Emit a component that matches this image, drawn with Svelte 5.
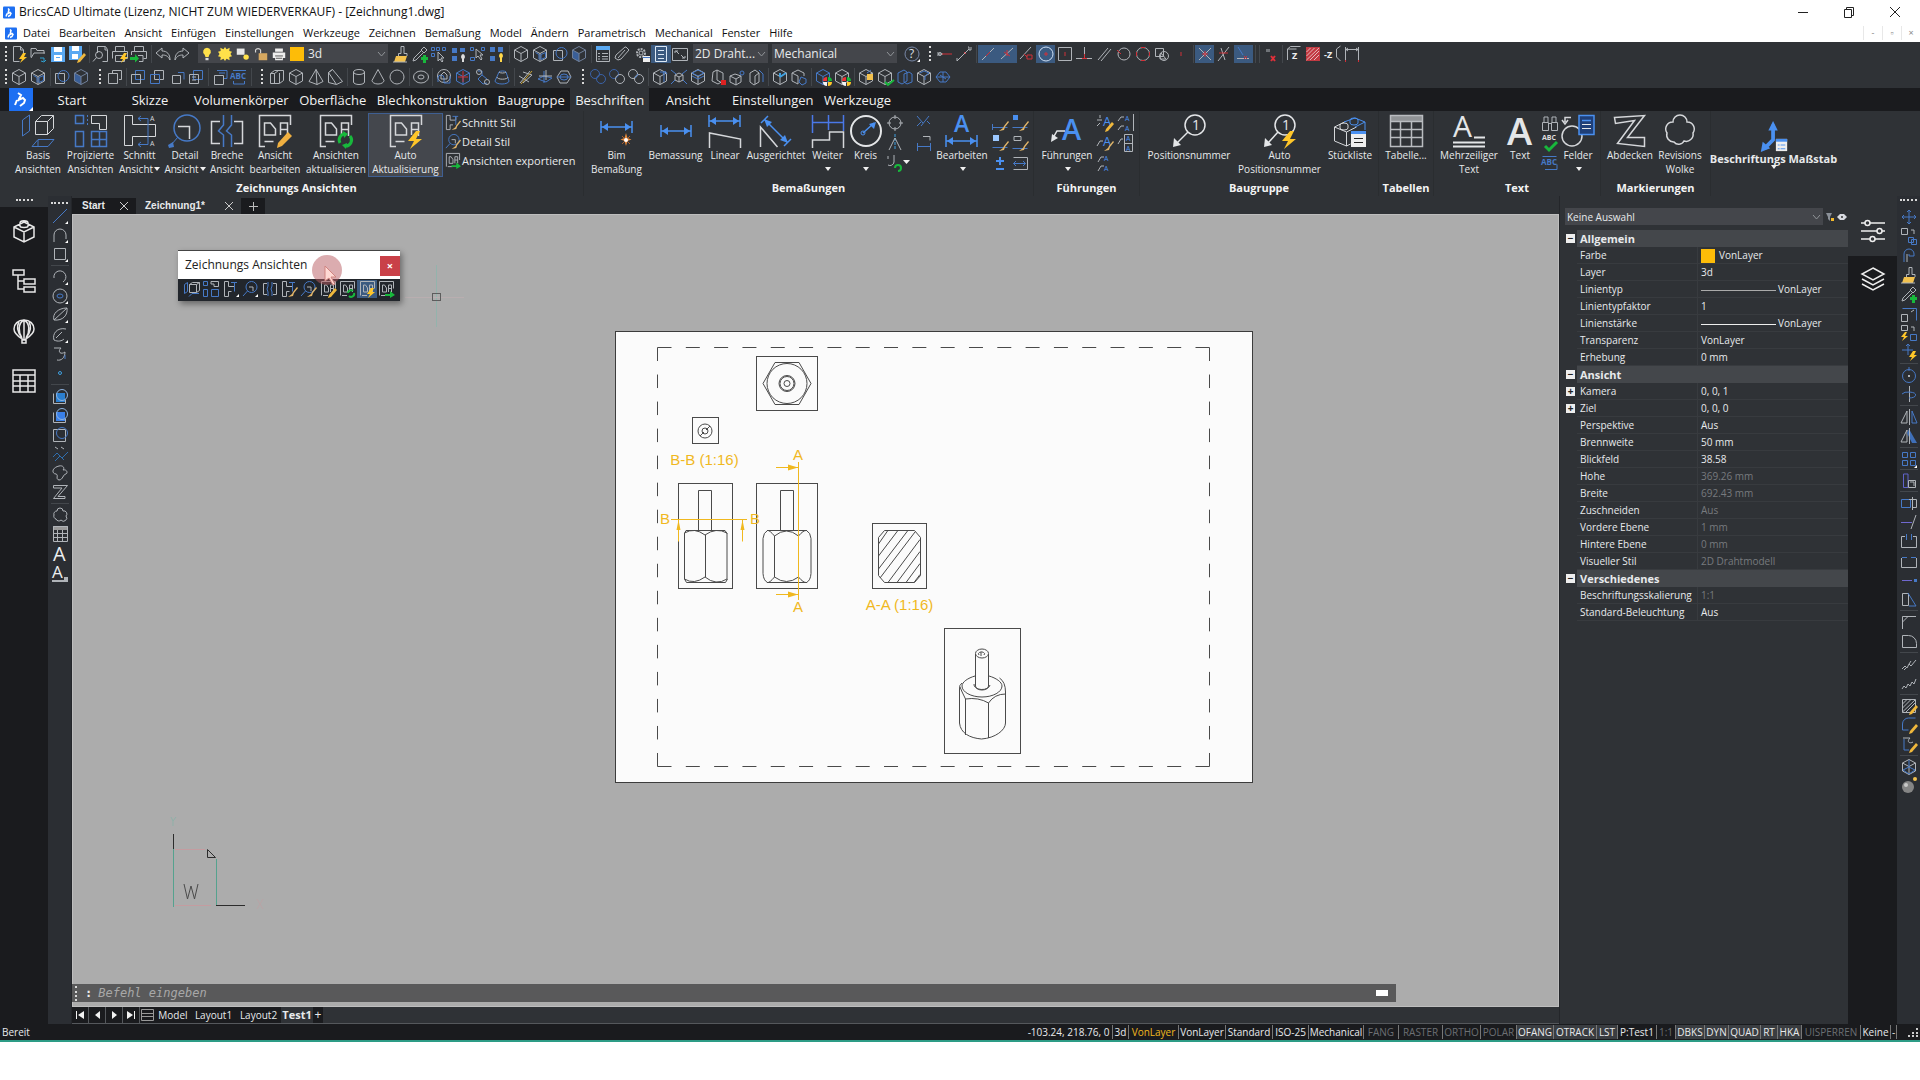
<script>
  const G = '#b0b4b9';
  const BL = '#4679c6';
  const p = (c, d, x = '') => `<path d="${d}" stroke="${c}" ${x}/>`;
  const w = (d) => p(G, d);
  const W = (d) => p('#e4e6e8', d, 'stroke-width="2"');
  const b = (d) => p(BL, d);
  const B = (d) => p('#4a90f0', d, 'stroke-width="2"');
  const r = (d) => p('#d03038', d);
  const f = (c, d) => `<path d="${d}" fill="${c}" stroke="none"/>`;
  const c = (x, y, rad, col = G, extra = '') => `<circle cx="${x}" cy="${y}" r="${rad}" stroke="${col}" ${extra}/>`;
  const t = (s, x, y, size, col, extra = '') =>
    `<text x="${x}" y="${y}" font-size="${size}" fill="${col}" stroke="none" font-family="Open Sans, sans-serif" ${extra}>${s}</text>`;

  const cubeD = 'M9 1.5l6.5 3.5v8L9 16.5 2.5 13V5zM2.5 5L9 8.5 15.5 5M9 8.5v8';
  const pen = f('#f0b83c', 'M16 8l2 2-6 7-3 1 1-3z');
  const bolt = f('#ffc629', 'M13 8l-4 6h3l-2 4 7-6h-3l2-4z');
  const brush = f('#e2b56a', 'M17 7l1 1-4 5-1 3-5 1 4-3 1-2z');
  const arrowG = f('#18b83c', 'M8 14h5v-3l5 4-5 3v-2H8z');
  const da = '<path d="M2.5 15.5v-14h14v7M4 15.5h5M5.500 12V5h2l2 3v4zM11.500 12V5h3v7M11.500 8.500h3" stroke="#b0b4b9"/>';
  const schnitt = w('M2.5 1.5h4v5h6v-4M2.500 1.500v15h4v-5h3') + b('M9 2.500h6M12.500 2.500v9');
  const detail = b('M16 7a5.500 5.500 0 1 1-11 0a5.500 5.500 0 1 1 11 0M6.500 11L2 16') + w('M8 7h4v4');
  const pie = f('#18b83c', 'M14 13V9a4 4 0 0 1 4 4z') + f('#e33', 'M13 13V9a4 4 0 0 0-4 4z') + f('#f4f4f4', 'M13 14H9a4 4 0 0 0 4 4z') + f('#ffc629', 'M14 14h4a4 4 0 0 1-4 4z');
  const sq2 = b('M6.500 2.500h9v9h-9z') + w('M2.500 6.500h9v9h-9z');

  const I = {
    neu: w('M13.500 8V5l-3-3.500h-7v15h6M10.500 1.500V5h3') + bolt,
    open: w('M2 12V3.500h5l1 2h7v3M2 13l3-5h11') + p('#2f9fd0', 'M11 13h4v3M12 16l3 1 2-2'),
    save: f('#5aa9f2', 'M2 2h14v15H2z') + f('#fff', 'M5 2h8v5H5zM5 10h8v6H5z') + f('#5aa9f2', 'M7 12h4v1H7z'),
    saveas: f('#5aa9f2', 'M1 1h13v14H1z') + f('#fff', 'M4 1h7v5H4zM4 9h6v5H4z') + pen,
    preview: w('M5.500 8V1.500h8l2 3v12h-5M13 2v3h2') + c(7, 10, 3.500) + w('M4.500 12.500L1 16.500'),
    print: w('M4.500 6V1.500h9V6M1.500 13.500v-7h15v7h-3M4.500 10.500h9v6h-9z') + bolt,
    printx: w('M4.500 6V1.500h9V6M1.500 10V6.500h15v7h-3M8 10.500h5v6H9') + f('#18b83c', 'M0 12h5v-3l4 4.500-4 4V15H0z'),
    undo: p(G, 'M8 3L2 8l6 5v-3c4 0 6 1 8 5 0-6-3-9-8-9z'),
    redo: p(G, 'M10 3l6 5-6 5v-3c-4 0-6 1-8 5 0-6 3-9 8-9z'),
    bulb: f('#ffe14a', 'M9 1a5 5 0 0 1 3 9l-1 3H7l-1-3a5 5 0 0 1 3-9z') + f('#ddd', 'M7 14h4v3H7z'),
    sun: f('#ffe14a', 'M9 0l2 3 4-2-.500 4 3.500 1-2 3 2 3-3.500 1L15 17l-4-2-2 3-2-3-4 2 .500-4L0 12l2-3-2-3 3.500-1L3 1l4 2z'),
    vp: f('#e6e6e6', 'M1 2h10v8H1z') + c(13, 13, 3.500, 'none', 'fill="#ffe14a"'),
    lock: f('#d6a860', 'M6 8h11v9H6z') + p('#d6d6d6', 'M8.500 8V4a3.500 3 0 0 0-6.500 0v3', 'stroke-width="1.500"'),
    printer: f('#eee', 'M4 2h10v4H4zM1 7h16v7H1zM4 12h10v5H4z') + p('#333', 'M4 11.500h10M5 14.500h8'),
    paint: f('#f2c14e', 'M4 11h11l-2 6H2z') + w('M6.500 11V8.500H9V1.500h3v7h3V11M1 17h14'),
    drop: w('M13 2l3 3-3 3-3-3zM10 6l-7 7-1 3 3-1 7-7') + f('#18b83c', 'M12 10h3v2h2v3h-2v3h-3v-3h-2v-3h2z'),
    sel1: b('M1.500 2.500h3v3h-3zM6.500 2.500h3v3h-3zM12.500 2.500h3v3h-3zM1.500 8.500h3v3h-3z') + w('M8 7v9l2-2 2 3 1-1-2-3h3z'),
    sel2: f(BL, 'M2 3h5v5H2zM2 11h5v5H2zM10 3h5v4h-5z') + f('#ddd', 'M13 9a3 3 0 0 1 1 5v3h-2v-3a3 3 0 0 1 1-5z'),
    sel3: b('M1.500 2.500h3v3h-3zM12.500 2.500h3v3h-3zM1.500 12.500h4v3h-4z') + w('M7 4v9l2-2 3 4 1-1-2-4h3z'),
    sel4: f(BL, 'M2 2h5v5H2zM10 2h5v5h-5zM2 11h5v5H2z') + f('#ffd84a', 'M13 8a3 3 0 0 1 1 5v4h-2v-4a3 3 0 0 1 1-5z'),
    cube: w(cubeD),
    cubeB: w(cubeD) + b('M4.500 7.500L8 9.500v5M10 9.500l4.500-2v5L10 14.500z'),
    cyl: w('M2.500 5.500h9v10h-9z') + b('M16 8a5.500 5.500 0 1 1-11 0a5.500 5.500 0 1 1 11 0'),
    cubeD: f('#3a5f98', 'M2.500 5L9 8.500v8L2.500 13z') + p('#70809a', cubeD),
    list: f('#5aa9f2', 'M2 1h14v4H2z') + w('M2.500 5v11.500h13V5M4 8.500h2M4 11.500h2M4 14h2M8 8.500h6M8 11.500h6M8 14h6'),
    clip: w('M13 2l3 3-8 9-3 1-3-2 1-3 9-8zM12 5l-7 8'),
    gear: c(8, 8, 4, G, 'stroke-dasharray="2 1" stroke-width="2"') + c(8, 8, 2) + f('#eee', 'M10 11h7v6h-7z') + b('M10 12.500h7'),
    panel: p('#dce8f5', 'M3.500 1.500h11v15h-11zM6 5.500h6M6 9.500h6M6 13.500h6'),
    full: w('M1.500 3.500h15v12h-15zM4 8V6h3M5 6l3 3M14 11v2h-3M13 13l-3-3'),
    help: c(9, 9, 7, '#7888a8') + t('?', 6, 13, 12, '#dfe3ea') + f('#fff', 'M17 14v3h-3z'),
    e1: w('M2 9h5M2 7v4') + r('M6 9h10') + c(4, 9, 1.500),
    e2: w('M2 16L14 4M2 13v3M13 2h1v3h2V2') + r('M9 7l2 2'),
    e3: w('M3 15L15 3') + r('M7 11l4-4'),
    e4: w('M3 14L15 3') + r('M6 7l6 4M9 5v6'),
    e5: w('M3 14L14 2') + r('M10 10h5v4h-5zM7 9l3 3'),
    e6: c(9, 9, 7, '#cfe0f5') + r('M9 7v4M7 9h4'),
    e7: w('M2.500 2.500h13v13h-13z') + r('M9 7v4'),
    e8: w('M1 13.500h16M9.500 2v7') + r('M9.500 9v5M7 13.500h5'),
    e9: w('M3 15L13 3M6 16L16 4'),
    e10: c(10, 9, 6) + r('M3 5l4 4'),
    e11: c(9, 9, 6.500) + r('M7 2.500h4M7 15.500h4M2.500 7v4M15.500 7v4'),
    e12: w('M2.500 3.500h8v8h-8z') + c(11, 11, 4.500) + w('M8 8l5 6h-6z'),
    e13: r('M8 8h2M8 10h2'),
    e14: w('M3 3l12 12M15 3L3 15') + r('M9 6v6M6 9h6'),
    e15: w('M3 16L14 2M6 3l4 12') + r('M4 8h9'),
    e16: w('M3 13.500h12') + b('M4 2l5 8') + r('M10 11l3 3M13 11l-3 3'),
    e17: w('M5 4v3M7 4v3') + p('#e0303a', 'M9 11l4 5M13 11l-4 5', 'stroke-width="2"'),
    e18: w('M2.500 15V4l3-2.500h10M2.500 4h9') + t('Z', 7, 14, 9, '#eee', 'font-weight="700"'),
    e19: f('#c23a42', 'M2 2h14v14H2z') + p('#e6b8ba', 'M2.500 7l4-4M2.500 11l8-8M2.500 15L15 3M6 15l9-9M10 15l5-5'),
    e20: t('-Z', 0, 13, 9, '#eee', 'font-weight="700"') + w('M12.500 12V4l4-3M12.500 12l4 4'),
    e21: w('M2.500 16V2M15.500 16V2M3 4.500h12M5 3L3 4.500 5 6M13 3l2 1.500L13 6') + r('M2.500 15v2M15.500 15v2'),
    sq: w('M6.500 5V2.500h9v9H13M2.500 5.500h9v10h-9z'),
    sqA: sq2,
    sqB: w('M6.500 2.500h9v9h-9z') + b('M2.500 6.500h9v9h-9z'),
    sqC: w('M4.500 7.500h8v8h-8z') + b('M10 4.500h6v7'),
    sqD: sq2 + w('M5 9h4M5 12h4'),
    sqE: w('M3.500 7.500h9v9h-9z') + b('M6 2.500h10v8h-3M8 5h6'),
    abc: t('ABC', 0, 11, 8, BL, 'font-weight="700"') + b('M3 2.500h13M3.500 13v3h11v-3'),
    poly: w('M2.500 5.500l4-3h9v10l-4 3h-9zM2.500 5.500h4v10M6.500 5.500l4-3M11.500 5v10'),
    pyr: w('M9 1.500l7 12-6 3-8-3zM9 1.500l1 15'),
    wedge: w('M2.500 4.500v10l8 2 6-3-10-12zM2.500 4.500l8 12M2.500 4.500l4-3'),
    can: w('M3.500 4a5.500 2.500 0 0 1 11 0v10a5.500 2.500 0 0 1-11 0zM3.500 4a5.500 2.500 0 0 0 11 0'),
    cone: w('M9 1.500l6 11a6 3.500 0 0 1-12 0z'),
    ball: c(9, 9, 7),
    torus: w('M1.500 9a7.500 6 0 1 1 15 0a7.500 6 0 1 1-15 0M6 9a3 2 0 1 1 6 0a3 2 0 1 1-6 0'),
    k1: c(9, 8, 6.500) + b('M3 14v-4a3 3 0 0 1 6 0v5h6V8') + w('M6 7l3-3 3 3v4H6z'),
    k2: b(cubeD) + r('M9 3v11M4 9h10'),
    k3: b('M4 3h4v4l5 4M8 7l-4 4 5 5 4-1') + c(5, 4, 2.500) + c(13, 14, 2.500),
    k4: b('M6 4a4 2 0 0 1 7 0l3 9a7 3 0 0 1-14 0z') + w('M6 4a4 2 0 0 0 7 0M4 9a5 2 0 0 0 11 0'),
    k5: w('M3 15L13 3M2 8l10 6M6 4l9 3-9 8') + p('#c8a030', 'M4 16L15 3'),
    k6: b('M2 11l6-3 8 2-6 4zM8 3v12') + w('M10 2v10M3 8h13'),
    k7: w('M2 9l4-6h7l3 6-4 6H5z') + b('M5 9a4 3 0 1 1 8 0a4 3 0 1 1-8 0M2 9h14'),
    un1: c(6, 6, 4.500, '#3a62a8') + c(12, 11, 4.500, '#3a62a8'),
    un2: c(6, 6, 4.500, '#3a62a8') + c(12, 11, 4.500),
    un3: c(6, 6, 4.500) + c(12, 11, 4.500) + b('M8 10l3-4'),
    cu1: w(cubeD) + b('M9 4h4v10M12 6l2-3 2 3'),
    cu2: w('M9 5l4 2v5l-4 2-4-2V7zM5 7l4 2 4-2M9 9v5') + b('M1 2l5 4M17 2l-5 4M1 16l4-4M17 16l-4-4'),
    cu3: w(cubeD) + b('M3 5l6-3 6 3-6 3zM3 8l6 3 6-3'),
    cu4: w('M4 4l4-2 6 3v8l-5 3-6-3zM8 2v10l5 3') + f('#d22', 'M12 12h5v5h-5z'),
    cu5: w('M2 8l5-2 6 2v6l-5 3-6-3zM2 8l6 3 5-3M8 11v6') + b('M12 5a2 2 0 1 1 4 0a2 2 0 1 1-4 0'),
    cu6: w('M3 5l5-3 4 3v9l-5 3-4-3zM12 5l-4 3v8') + b('M12 2l4 4v8'),
    cu7: w(cubeD) + p('#3fa0e0', 'M9 9l6-4M9 9V5', 'stroke-width="2"'),
    cu8: w('M2 5l6-3 6 3v3M2 5v8l6 3M2 5l6 3v8') + b('M11 9l5 2v4l-4 2-3-3z'),
    pieA: b(cubeD) + pie,
    pieB: w(cubeD) + pie,
    cuY: w(cubeD) + f('#f2c14e', 'M10 6h6v6h-6z') + b('M10 5l4-3'),
    cuG: w(cubeD) + p('#18b83c', 'M9 14l3 3 6-5', 'stroke-width="2"'),
    cuP: b('M2 5l6-3 3 2v9l-5 3-4-2zM8 6l5-2 3 2v8l-5 2-3-2z'),
    cuW: w(cubeD) + b('M5 5l4-2 5 2-4 3v4'),
    cuL: b('M2 9l4-5h6l4 5-4 5H6zM2 9h14M9 4v10M6 7l6 4'),
    v1: b('M1.500 4.500l3-2v9l-3 2zM6 16.500l3-3h7') + w('M6.500 4.500l3-2h7v8l-3 2h-7zM6.500 4.500h7v8M13.500 4.500l3-2'),
    v2: b('M1.500 1.500h4v4h-4zM1.500 9.500h4v7h-4zM9.500 9.500h7v7h-7z') + w('M9 1.500h7.500v5H12v-2.500H9z'),
    v3: schnitt + f('#fff', 'M17 14v3h-3z'),
    v4: detail + f('#fff', 'M17 14v3h-3z'),
    v5: w('M6 3.500H2.500v11H6M12 3.500h3.500v11H12') + b('M7 2v4l-1 3 1 3v4M11 2v4l-1 3 1 3v4'),
    v6: schnitt + brush, v7: detail + brush, v8: da + pen,
    v9: da + p('#18b83c', 'M10 13a3 3 0 0 1 5-2M16 13a3 3 0 0 1-5 3', 'stroke-width="2"'),
    v10: da + bolt, v11: da + arrowG,
    l1: b('M2 16L16 2') + f('#fff', 'M17 14v3h-3z'),
    l2: w('M3 16V9a6 6 0 0 1 12 0v4') + f('#fff', 'M17 14v3h-3z'),
    l3: w('M3.500 3.500h11v11h-11z') + f('#fff', 'M17 14v3h-3z'),
    l4: w('M3 10a6 6 0 1 1 9 4') + f('#fff', 'M17 14v3h-3z'),
    l5: c(9, 9, 7) + b('M6 9a3 2 0 1 1 6 0a3 2 0 1 1-6 0') + f('#fff', 'M17 14v3h-3z'),
    l6: w('M3 14C1 8 7 2 16 2c1 7-4 13-13 12zM3 14L16 2') + f('#fff', 'M17 14v3h-3z'),
    l7: w('M15 3C6 1 1 8 3 14c4 2 8 1 10-1M5 12l6-6') + f('#fff', 'M17 14v3h-3z'),
    l8: w('M3 3h7c-4 4 0 7 4 4 0 6-4 9-8 8') + b('M14 10v4'),
    l9: c(9, 9, 1.500, '#3fa0e0'),
    l10: f('#2b7fd0', 'M5 6h9v9H5z') + w('M2.500 6.500v10h12v-4') + c(11, 8, 5.500, '#8fb4e0'),
    l11: f('#3a80e8', 'M5 6h9v9H5z') + w('M2.500 6.500v10h12v-4') + c(11, 8, 5.500, '#8fb4e0'),
    l12: w('M2.500 4.500h12v12h-12z') + c(11, 8, 5.500, BL),
    l13: w('M4 2l3 2M10 2l3 2') + p('#2f6fb0', 'M2 12l4-4 5 5 6-6M4 16l5-5 4 4'),
    l14: w('M8 2c4-1 6 2 4 4 4-1 5 3 3 4-3 0-3 6-7 6-4-1 0-5-3-6-4 0-5-6 3-8z'),
    l15: w('M2.500 2.500h14L7 13.500h7v2H2.500L11 5H2.500z'),
    l16: w('M6 5a3 3 0 0 1 6 0 3 3 0 0 1 3 5 3 3 0 0 1-5 4 3 3 0 0 1-5-1 3 3 0 0 1-2-4 3 3 0 0 1 3-4z'),
    l17: f('#999', 'M2 1h15v4H2z') + w('M2.500 1.500h14v15h-14zM2 8.500h15M2 12.500h15M6.500 5v11M11.500 5v11'),
    l18: W('M3 16L9 2l6 14M5 11h8'),
    l19: W('M2 14L7 2l5 12M4 10h6') + f('#b9bcc0', 'M1 15h16v3H1z'),
    r1: b('M9 2v14M2 9h14M7 4l2-2 2 2M7 14l2 2 2-2M4 7L2 9l2 2M14 7l2 2-2 2'),
    r2: w('M1.500 1.500h6v6h-6zM11 3h3v4') + b('M8.500 10.500h5v5h-5zM11.500 12.500h5v5h-5z'),
    r3: b('M4 16V8a5 5 0 0 1 10 0v2H9V8') + w('M7 16V8'),
    r4: b('M2.500 3.500h14v12') + w('M1.500 9.500h6v7h-6zM11 7l3-2'),
    r5: w('M1.500 1.500h6v5h-6zM11 3h3v4') + b('M10.500 10.500h6v6h-6z') + f('#ffc629', 'M5 8l-4 5h3l-2 4 6-5H5l2-4z'),
    r6: b('M8 1v11M2 7h11M6 3l2-2 2 2') + bolt,
    r7: c(9, 10, 6.500, BL) + f(G, 'M8 9h2v2H8z') + b('M9 1v4'),
    r8: w('M9.500 1v16') + b('M2 9a7 3 0 1 1 7 4'),
    r9: w('M7 3v12H1zM9.500 1v16') + b('M12 3v12h5z'),
    r10: w('M7 3v12H1z') + f('#3f6fb8', 'M9 2l8 14h-5L7 6z') + w('M9.500 1v16'),
    r11: b('M2.500 2.500h5v5h-5zM10.500 2.500h5v5h-5zM2.500 10.500h5v5h-5zM10.500 10.500h5v5h-5z') + f('#fff', 'M17 15v3h-3z'),
    r12: p('#5f62c8', 'M3.500 2v13.500H8V2z') + w('M8.500 8.500h7v7h-7zM10 10h4v4'),
    r13: b('M1.500 5.500h9v8h-9z') + w('M12.500 3v13M9 5.500h7.500v8H12'),
    r14: p('#7068d0', 'M1 9.500h11') + w('M16 2l-5 14'),
    r15: w('M5 4.500H1.500v11h15v-11H13') + b('M6.500 2v6M11.500 2v6'),
    r16: w('M1.500 6v9.500h15V6') + b('M2 5.500h5M11 5.500h5'),
    r17: p('#7068d0', 'M2 9.500h10') + f(BL, 'M14 8h3v3h-3z'),
    r18: w('M2.500 3.500h6v12h-6z') + b('M8 3l8 13H9'),
    r19: w('M2.500 16V3.500H16M2.500 9l6-6'),
    r20: w('M2.500 15.500v-12h6a8 8 0 0 1 8 8v4z'),
    r21: w('M2 14l3-3 2 2 2-4 2 2 5-6M4 15l2-2M9 9l2-3'),
    r22: w('M2 15l2-3 2 2 2-4 2 2 2-4 2 2 2-5'),
    r23: w('M2.500 2.500h13v13h-13zM2.500 7l4-4M2.500 11l8-8M2.500 15L15 3M6 15l9-9') + pen,
    r24: b('M2.500 14V8a6 6 0 0 1 6-6h7M2.500 14h6') + pen,
    r25: w('M3 3h7c-4 4 0 6 3 4') + b('M4 4v11h5') + pen,
    r26: w(cubeD) + b('M3 12l6-3 6 3-6 4zM9 2v7'),
    r27: c(8, 10, 6, 'none', 'fill="#858585"') + c(6, 8, 2, 'none', 'fill="#c8c8c8"') + c(15, 2, 2, 'none', 'fill="#f2c14e"'),
    m1: c(9, 9, 6) + w('M9 1v4M9 13v4M1 9h4M13 9h4'),
    m2: p('#3fa0e0', 'M9 0v16', 'stroke-dasharray="3 1"') + w('M9 4L3 16M9 4l6 12'),
    m3: w('M8 1v7a4 4 0 0 1-6 3M2 2v3') + p('#18b83c', 'M9 14a3 3 0 1 1 3 3', 'stroke-width="2"') + f('#f0f0f0', 'M17 6h7l-3.500 4z'),
    m4: b('M2 2l6 7M14 2L6 12M2 12l4-4M12 7l3 3'),
    m5: b('M2.500 17V9M15.500 17V9M3 12.500h12') + w('M8 2.500h7v4'),
    s1: b('M1.500 10v6M1.500 13.500h15') + brush,
    s2: f('#4a90f0', 'M2 1h5v5H2z') + b('M1.500 13.500h15') + brush,
    s3: f('#9cc8ff', 'M2 1h6v6H2z') + b('M1.500 13.500h15') + brush,
    s4: w('M3 2.500h7v4H3z') + b('M1.500 14.500h15') + brush,
    s5: B('M9 3v8M5 7h8M5 15h8'),
    s6: w('M2.500 3.500h14v12h-14') + b('M2.500 9.500h12M5 7L2.500 9.500 5 12M12 7l2.500 2.500L12 12'),
    f1: t('A', 7, 12, 13, '#4a90f0') + w('M1 6h5M4 1v3M1 12l3-3') + pen,
    f2: t('A', 9, 7, 7, '#4a90f0') + t('A', 9, 17, 7, '#4a90f0') + w('M2 7l3-4h3M2 16l3-4h3M17.500 0v17'),
    f3: t('A', 7, 12, 13, '#4a90f0') + w('M1 12l3-5h3') + brush,
    f4: t('A', 10, 7, 7, '#4a90f0') + t('A', 10, 17, 7, '#4a90f0') + w('M2 10l3-5h2M8.500 .500h8v17h-8zM8 9.500h8'),
    f5: t('A', 8, 7, 7, '#4a90f0') + t('A', 8, 17, 7, '#4a90f0') + w('M2 8l3-5h3M2 17l3-5h3'),
    bino: w('M3 8V3h4v5M11 8V3h4v5M1.500 8.500h6v8h-6zM10.500 8.500h6v8h-6zM7 9.500h4'),
    spell: t('ABC', 1, 6, 7, '#ddd', 'font-weight="700"') + p('#18b83c', 'M4 12l4 4 8-8', 'stroke-width="3"'),
    abc2: t('ABC', 0, 11, 8, BL, 'font-weight="700"') + b('M1.500 2.500h14M4 15.500h12v-5'),
  };

  const DA = '<path d="M7 32.500H1.500v-31h31V11M6.500 27.500h9M6.500 21V9h6l5 6v6zM22.500 21V9h7v13M22.500 15.500h7" stroke="#d5d7da" stroke-width="1.500"/>';
  const dimArrow = (y, x1, x2) =>
    p('#4a90f0', `M${x1} ${y}H${x2}M${x1} ${y - 6}v12M${x2} ${y - 6}v12`, 'stroke-width="1.500"') +
    f('#4a90f0', `M${x1 + 1} ${y}l6-4v8zM${x2 - 1} ${y}l-6-4v8z`);
  const boltL = f('#ffc629', 'M27 17l-8 10h6l-4 8 12-10h-6l4-8z');
  const L = {
    basis: b('M1.500 6l7-5v16l-7 5zM11 32.500l6-7h16l-6 7zM17 26v6') + p('#d5d7da', 'M14.500 7.500l6-6h12v13l-6 6h-12zM14.500 7.500h12v13M26.500 7.500l6-6'),
    proj: p(BL, 'M1.500 1.500h8v8h-8zM1.500 17.500h8v15h-8zM17.500 17.500h15v15h-15zM17 25.500h16M25.500 17v15', 'stroke-width="1.500"') + p('#d5d7da', 'M17.500 1.500h15v14h-7v-6h-8z') + p(BL, 'M13.500 1v12', 'stroke-dasharray="2 2"'),
    schnitt: p('#d5d7da', 'M1.500 1.500h8v9h23v12h-23v9h-8z') + b('M15 4.500h10v26H15M18 2l-3 2.500L18 7M18 28l-3 2.500 3 2.500') + t('A', 27, 7, 7, '#d5d7da') + t('A', 27, 32, 7, '#d5d7da'),
    detail: c(19, 14, 13, BL, 'stroke-width="1.500"') + b('M10 23l-7 8') + f(BL, 'M0 31l5-3 1 5-5 1z') + p('#d5d7da', 'M10 12.500h11.500V25', 'stroke-width="1.500"'),
    breche: p('#d5d7da', 'M10 7.500H1.500v22H10M24 7.500h8.500v22H24', 'stroke-width="1.500"') + p(BL, 'M13.500 1v10l-5 6 5 4v12M21.500 1v10l-5 6 5 4v12', 'stroke-width="1.500"'),
    edit: DA + f('#f0b040', 'M30 18l4 4-10 10-5 2 1-5z'),
    upd: DA + p('#18b83c', 'M21 29a6 6 0 0 1 5-9M31 22a6 6 0 0 1-5 10', 'stroke-width="3"') + f('#18b83c', 'M24 17l5 3-4 4zM27 35l-4-4 5-2z'),
    auto: DA + boltL,
    bim: dimArrow(13, 1, 32) + f('#e8893a', 'M26 19l1.500 5 4 1.500-4 1.500-1.500 5-1.500-5-4-1.500 4-1.500z') + p('#b0602a', 'M22 22l8 8M30 22l-8 8') + c(26, 26, 2, 'none', 'fill="#fff"'),
    bem: dimArrow(17, 2, 32),
    linear: dimArrow(7, 1, 32) + p('#d5d7da', 'M1.500 34V19l31 6v9', 'stroke-width="1.500"'),
    ausg: p('#4a90f0', 'M2 9l7-7M25 32l7-7M5 5l23 23', 'stroke-width="1.500"') + f('#4a90f0', 'M5 5l8 3-5 5zM29 29l-3-8-5 5z') + p('#d5d7da', 'M1.500 33V13l17 20', 'stroke-width="1.500"'),
    weiter: p('#4a78e8', 'M1.500 1v18M32.500 1v16M1.500 8.500h31M17.500 1v15', 'stroke-width="1.500"') + p('#d5d7da', 'M1.500 34v-8h17v-8h14v16', 'stroke-width="1.500"'),
    kreis: c(17, 17, 15, '#e4e6e8', 'stroke-width="2"') + p('#4a90f0', 'M14 19l11-10', 'stroke-width="1.500"') + f('#4a90f0', 'M27 8l-2 7-5-5z') + c(14, 19, 2, '#4a90f0'),
    bearb: t('A', 9, 18, 23, '#4a90f0', 'font-weight="600"') + dimArrow(27, 1, 32),
    fuehr: t('A', 12, 26, 29, '#4a90f0', 'font-weight="600"') + p('#e4e6e8', 'M3 24l4-7h8', 'stroke-width="1.500"') + f('#e4e6e8', 'M1 28l1-8 6 4z'),
    pos: c(23, 11, 10, '#e4e6e8', 'stroke-width="1.500"') + t('1', 20, 16, 14, '#e4e6e8') + p('#e4e6e8', 'M16 18L5 29', 'stroke-width="1.500"') + f('#e4e6e8', 'M1 33l1-9 7 7z'),
    autopos: c(22, 11, 10, '#e4e6e8', 'stroke-width="1.500"') + t('1', 19, 16, 14, '#e4e6e8') + p('#e4e6e8', 'M15 18L5 29', 'stroke-width="1.500"') + f('#e4e6e8', 'M1 33l1-9 7 7z') + boltL,
    stueck: p('#d5d7da', 'M1.500 13l12 5v14l-12-5zM13.500 18l10-5M1.500 13l10-5M13.500 32l4-2M7 11a4 2 0 1 1 8 0v3a4 2 0 0 1-8 0z') + p('#4a90f0', 'M11 8l11-4 10 4v8M22 13l10-5M17 6a4 2 0 1 1 8 0v3a4 2 0 0 1-8 0z') + f('#eee', 'M18 17h15v16H18z') + f('#4a90f0', 'M18 17h15v3H18z') + p('#222', 'M21 24.500h9M21 28.500h9'),
    tab: f('#909396', 'M1 1h32v6H1z') + p('#b9bcc0', 'M1.500 1.500h32v31h-32zM1 7.500h32M1 15.500h32M1 23.500h32M11.500 7v25M22.500 7v25', 'stroke-width="1.500"'),
    mtext: t('A', 1, 23, 30, '#e4e6e8') + p('#e4e6e8', 'M22 23.500h11M1 28.500h32M1 32.500h32', 'stroke-width="2"'),
    text: W('M5 33L16 2h3l11 31M9.500 22h16'),
    felder: c(11, 22, 10, '#d5d7da', 'stroke-width="1.500"') + p('#d5d7da', 'M4 8V3.500h6M1 6l3 4 3-4', 'stroke-width="1.500"') + f('#1f3f78', 'M18 1h15v20H18z') + p('#4a90f0', 'M18 1.500h15v19H18zM21 6.500h9', 'stroke-width="1.500"') + p('#e4e6e8', 'M21 10.500h9M21 14.500h9'),
    abd: p('#d5d7da', 'M1.500 3.500l30-2-17 22 17 0v9l-27-3 17-23-19 3z', 'stroke-width="1.500"'),
    rev: p('#d5d7da', 'M10 8a7 7 0 0 1 14 0 7 7 0 0 1 6 11 7 7 0 0 1-9 8 6 6 0 0 1-10 1 7 7 0 0 1-7-9 7 7 0 0 1 6-11z', 'stroke-width="1.500"'),
    mass: p('#4a90f0', 'M16 4v16l-9 9', 'stroke-width="4"') + f('#4a90f0', 'M16 0l5 10H11zM3 33l2-11 8 7z') + f('#eee', 'M19 19h12v13H19z') + f('#4a90f0', 'M19 19h12v3H19z') + p('#4a90f0', 'M21 25.500h2M21 29.500h2M24 25.500h5M24 29.500h5'),
  };
  L.text = t('A', 4, 31, 38, '#e4e6e8', 'font-weight="600"');
  I.l18 = t('A', 2, 16, 20, '#eceef0');
  I.l19 = t('A', 1, 14, 17, '#eceef0') + f('#b0b4b9', 'M1 16h16v2H1zM13 13h4v3h-4z');

  const menus = ['Datei', 'Bearbeiten', 'Ansicht', 'Einfügen', 'Einstellungen', 'Werkzeuge', 'Zeichnen', 'Bemaßung', 'Model', 'Ändern', 'Parametrisch', 'Mechanical', 'Fenster', 'Hilfe'];
  const tabs = ['Start', 'Skizze', 'Volumenkörper', 'Oberfläche', 'Blechkonstruktion', 'Baugruppe', 'Beschriften', 'Ansicht', 'Einstellungen', 'Werkzeuge'];
  const on = new Set(['panel', 'e3', 'e4', 'e6', 'e14', 'e16', 'v10']);

  const bar1a = [':', ['neu', 'open', 'save', 'saveas'], '|', ['preview', 'print', 'printx'], '|', ['undo', 'redo']];
  const bar1b = [['paint', 'drop', 'sel1', 'sel2', 'sel3', 'sel4'], '|', ['cube', 'cubeB', 'cyl', 'cubeD'], '|', ['list', 'clip', 'gear', 'panel', 'full']];
  const bar1c = [['help'], ':', ['e1', 'e2'], '|', ['e3', 'e4', 'e5', 'e6', 'e7', 'e8', 'e9', 'e10', 'e11', 'e12', 'e13'], '|', ['e14', 'e15', 'e16'], '|', '|', ['e17'], '|', ['e18', 'e19', 'e20', 'e21']];
  const bar2 = [':', ['cube', 'cubeB'], '|', ['cyl', 'cubeD'], ':', ['sq'], '|', ['sqA', 'sqB', 'sqC', 'sqD'], '|', ['sqE', 'abc'], '|', ':', ['poly', 'cube', 'pyr', 'wedge'], '|', ['can', 'cone', 'ball'], '|', ['torus'], '|', ['k1', 'k2', 'k3', 'k4'], '|', ['k5', 'k6', 'k7'], ':', ['un1', 'un2', 'un3'], '|', ['cu1', 'cu2', 'cu3', 'cu4', 'cu5', 'cu6'], '|', ['cu7', 'cu8'], '|', ['pieA', 'pieB'], '|', ['cuY', 'cuG', 'cuP', 'cuW', 'cuL']];
  const leftTools = [['l1', 'l2', 'l3'], '|', ['l4', 'l5', 'l6', 'l7', 'l8', 'l9'], '|', ['l10', 'l11', 'l12', 'l13', 'l14', 'l15'], '|', ['l16', 'l17', 'l18', 'l19']];
  const rightTools = [['r1', 'r2', 'r3', 'paint', 'drop', 'r4', 'r5', 'r6'], '|', ['r7', 'r8'], '|', ['r9', 'r10'], '|', ['r11'], '|', ['r12'], '|', ['r13', 'r14', 'r15', 'r16', 'r17', 'r18'], '|', ['r19', 'r20'], '|', ['r21', 'r22'], '|', ['r23', 'r24', 'r25'], '|', ['r26', 'r27']];
  const floatTools = ['v1', 'v2', 'v3', 'v4', 'v5', 'v6', 'v7', 'v8', 'v9', 'v10', 'v11'];
  const span = (items) => Math.round(items.length * 19.4);

  const groups = [
    { title: 'Zeichnungs Ansichten', cls: 'g1', items: [
      { i: 'basis', l: ['Basis', 'Ansichten'] }, { i: 'proj', l: ['Projizierte', 'Ansichten'] },
      { i: 'schnitt', l: ['Schnitt', 'Ansicht'], dd: true }, { i: 'detail', l: ['Detail', 'Ansicht'], dd: true },
      { i: 'breche', l: ['Breche', 'Ansicht'] }, { i: 'edit', l: ['Ansicht', 'bearbeiten'] },
      { i: 'upd', l: ['Ansichten', 'aktualisieren'] }, { i: 'auto', l: ['Auto', 'Aktualisierung'], on: true },
      { rows: [['v6', 'Schnitt Stil'], ['v7', 'Detail Stil'], ['v11', 'Ansichten exportieren']] } ] },
    { title: 'Bemaßungen', cls: 'g2', items: [
      { i: 'bim', l: ['Bim', 'Bemaßung'] }, { i: 'bem', l: ['Bemassung'] }, { i: 'linear', l: ['Linear'] },
      { i: 'ausg', l: ['Ausgerichtet'] }, { i: 'weiter', l: ['Weiter', ''], dd: true }, { i: 'kreis', l: ['Kreis', ''], dd: true },
      { mini: ['m1', 'm2', 'm3'] }, { mini: ['m4', 'm5'] }, { i: 'bearb', l: ['Bearbeiten', ''], dd: true },
      { mini: ['s1', 's2', 's3', 's4', 's5', 's6'], two: true } ] },
    { title: 'Führungen', cls: 'g3', items: [
      { i: 'fuehr', l: ['Führungen', ''], dd: true }, { mini: ['f1', 'f2', 'f3', 'f4', 'f5'], two: true } ] },
    { title: 'Baugruppe', cls: 'g4', items: [
      { i: 'pos', l: ['Positionsnummer'] }, { i: 'autopos', l: ['Auto', 'Positionsnummer'] }, { i: 'stueck', l: ['Stückliste'] } ] },
    { title: 'Tabellen', cls: 'g5', items: [{ i: 'tab', l: ['Tabelle...'] }] },
    { title: 'Text', cls: 'g6', items: [
      { i: 'mtext', l: ['Mehrzeiliger', 'Text'] }, { i: 'text', l: ['Text'] }, { mini: ['bino', 'spell', 'abc2'] }, { i: 'felder', l: ['Felder', ''], dd: true } ] },
    { title: 'Markierungen', cls: 'g7', items: [{ i: 'abd', l: ['Abdecken'] }, { i: 'rev', l: ['Revisions', 'Wolke'] }] },
  ];

  const sections = [
    { name: 'Allgemein', rows: [
      { k: 'Farbe', v: 'VonLayer', swatch: true }, { k: 'Layer', v: '3d' }, { k: 'Linientyp', v: 'VonLayer', line: 'thin' },
      { k: 'Linientypfaktor', v: '1' }, { k: 'Linienstärke', v: 'VonLayer', line: 'bright' },
      { k: 'Transparenz', v: 'VonLayer' }, { k: 'Erhebung', v: '0 mm' } ] },
    { name: 'Ansicht', rows: [
      { k: 'Kamera', v: '0, 0, 1', plus: true }, { k: 'Ziel', v: '0, 0, 0', plus: true }, { k: 'Perspektive', v: 'Aus' },
      { k: 'Brennweite', v: '50 mm' }, { k: 'Blickfeld', v: '38.58' }, { k: 'Hohe', v: '369.26 mm', dim: true },
      { k: 'Breite', v: '692.43 mm', dim: true }, { k: 'Zuschneiden', v: 'Aus', dim: true }, { k: 'Vordere Ebene', v: '1 mm', dim: true },
      { k: 'Hintere Ebene', v: '0 mm', dim: true }, { k: 'Visueller Stil', v: '2D Drahtmodell', dim: true } ] },
    { name: 'Verschiedenes', rows: [
      { k: 'Beschriftungsskalierung', v: '1:1', dim: true }, { k: 'Standard-Beleuchtung', v: 'Aus' } ] },
  ];

  const status = [
    ['-103.24, 218.76, 0'], ['3d'], ['VonLayer', 'gold'], ['VonLayer'], ['Standard'], ['ISO-25'], ['Mechanical'],
    ['FANG', 'off'], ['RASTER', 'off'], ['ORTHO', 'off'], ['POLAR', 'off'], ['OFANG', 'lit'], ['OTRACK', 'lit'], ['LST', 'lit'],
    ['P:Test1'], ['1:1', 'off'], ['DBKS', 'lit'], ['DYN', 'lit'], ['QUAD', 'lit'], ['RT', 'lit'], ['HKA', 'lit'],
    ['UISPERREN', 'off'], ['Keine'], ['-'],
  ];
</script>

{#snippet tool(name)}
  <button class="tool" class:on={on.has(name)} aria-label={name}>
    <svg viewBox="0 0 18 18">{@html I[name]}</svg>
  </button>
{/snippet}

{#snippet bar(parts)}
  {#each parts as part}
    {#if part === ':'}<i class="grip"></i>
    {:else if part === '|'}<i class="sep"></i>
    {:else}
      <div class="strip" style:width="{span(part)}px">
        {#each part as name}{@render tool(name)}{/each}
      </div>
    {/if}
  {/each}
{/snippet}

{#snippet column(parts)}
  {#each parts as part}
    {#if part === '|'}<i class="hsep"></i>
    {:else}
      <div class="vstrip" style:height="{span(part)}px">
        {#each part as name}{@render tool(name)}{/each}
      </div>
    {/if}
  {/each}
{/snippet}

{#snippet logo()}
  <svg class="logo" viewBox="0 0 12 12" aria-hidden="true"><rect width="12" height="12" rx="1" fill="#1d6ff2" /><path d="M5 2l1 1-1 4 2-1 1 1-1 2-2 1M4 7l-1 3" fill="none" stroke="#fff" stroke-width="1.500" /></svg>
{/snippet}

<div class="app">
  <header class="title">
    {@render logo()}
    <h1>BricsCAD Ultimate (Lizenz, NICHT ZUM WIEDERVERKAUF) - [Zeichnung1.dwg]</h1>
    <div class="winbtns">
      <button aria-label="Minimieren"><svg viewBox="0 0 12 12"><path d="M1 6.500h10" /></svg></button>
      <button aria-label="Wiederherstellen"><svg viewBox="0 0 12 12"><path d="M1.500 3.500h7v8h-7zM3.500 3V1.500h7v8H9" /></svg></button>
      <button aria-label="Schließen"><svg viewBox="0 0 12 12"><path d="M1 1l10 10M11 1L1 11" /></svg></button>
    </div>
  </header>

  <nav class="menu">
    {@render logo()}
    <div class="items">
      {#each menus as m}<button>{m}</button>{/each}
    </div>
    <div class="mdi"><button aria-label="Fenster minimieren">-</button><button aria-label="Fenster teilen">▫</button><button aria-label="Fenster schließen">×</button></div>
  </nav>

  <div class="toolbar">
    {@render bar(bar1a)}
    <div class="layers">
      {#each ['bulb', 'sun', 'vp', 'lock', 'printer'] as n}
        <svg viewBox="0 0 18 18">{@html I[n]}</svg>
      {/each}
      <i class="swatch"></i>
      <select aria-label="Layer"><option>3d</option></select>
    </div>
    {@render bar(bar1b)}
    <select class="combo style" aria-label="Visueller Stil"><option>2D Draht...</option></select>
    <select class="combo space" aria-label="Arbeitsbereich"><option>Mechanical</option></select>
    {@render bar(bar1c)}
  </div>
  <div class="toolbar">{@render bar(bar2)}</div>

  <nav class="tabs">
    <button class="brand" aria-label="BricsCAD">
      <svg viewBox="0 0 24 23"><rect width="24" height="23" fill="#1d6ff2" /><path d="M9 5l3 2-3 6M9 12l5-2 2 2-1 3-4 3M8 12l-2 5" fill="none" stroke="#fff" stroke-width="2" /><path d="M24 19v4h-4z" fill="#fff" /></svg>
    </button>
    {#each tabs as name}
      <button class="tab" class:active={name === 'Beschriften'}>{name}</button>
    {/each}
  </nav>

  <section class="ribbon">
    {#each groups as g}
      <div class="group {g.cls}">
        <div class="cells">
          {#each g.items as it}
            {#if it.rows}
              <div class="rows">
                {#each it.rows as [icon, label]}
                  <button><svg viewBox="0 0 18 18">{@html I[icon]}</svg>{label}</button>
                {/each}
              </div>
            {:else if it.mini}
              <div class="mini" class:two={it.two}>
                {#each it.mini as name}{@render tool(name)}{/each}
              </div>
            {:else}
              <button class="big" class:lit={it.on}>
                <svg viewBox="0 0 34 34">{@html L[it.i]}</svg>
                {#each it.l as line, n}
                  <span>{line}{#if it.dd && n === 1}<i class="dd"></i>{/if}</span>
                {/each}
              </button>
            {/if}
          {/each}
        </div>
        <h2>{g.title}</h2>
      </div>
    {/each}
    <button class="scale">
      <svg viewBox="0 0 34 34">{@html L.mass}</svg>
      <span>Beschriftungs Maßstab</span>
      <i class="dd"></i>
    </button>
  </section>

  <main>
    <aside class="panels">
      <i class="hgrip"></i>
      <div class="dark">
        <button aria-label="Bibliothek"><svg viewBox="0 0 24 24"><path d="M12 3l10 5v10l-10 5L2 18V8zM2 8l10 5 10-5M12 13v10M8 4c0-3 8-3 8 0v3c0 2-8 2-8 0z" /></svg></button>
        <button aria-label="Struktur"><svg viewBox="0 0 24 24"><path d="M1 1h11v5H1zM6 6v14h6M6 12h6M12 10h11v5H12zM12 18h11v5H12z" /></svg></button>
        <button aria-label="Ballon"><svg viewBox="0 0 24 24"><path d="M12 1c6 0 10 4 10 9 0 4-5 8-8 10h-4C7 18 2 14 2 10c0-5 4-9 10-9zM12 1c-6 3-6 12-2 18M12 1c6 3 6 12 2 18M12 1v18M7 3C4 8 6 14 10 19M17 3c3 5 1 11-3 16M10 21h4v3h-4z" /></svg></button>
        <button aria-label="Tabelle"><svg viewBox="0 0 24 24"><path d="M1 1h22v22H1zM1 6h22M1 12h22M1 17h22M8 6v17M16 6v17" /></svg></button>
      </div>
    </aside>

    <aside class="tools">
      <i class="hgrip"></i>
      {@render column(leftTools)}
    </aside>

    <section class="work">
      <nav class="docs">
        <div class="doc first"><button>Start</button><button class="x" aria-label="Start schließen"><svg viewBox="0 0 8 8"><path d="M0 0l8 8M8 0L0 8" /></svg></button></div>
        <div class="doc cur"><button>Zeichnung1*</button><button class="x" aria-label="Zeichnung1 schließen"><svg viewBox="0 0 8 8"><path d="M0 0l8 8M8 0L0 8" /></svg></button></div>
        <button class="plus" aria-label="Neue Zeichnung"><svg viewBox="0 0 9 9"><path d="M4.500 0v9M0 4.500h9" /></svg></button>
      </nav>

      <div class="canvas">
        <svg class="drawing" viewBox="72 214 1487 793" preserveAspectRatio="xMidYMid meet">
          <g fill="none" stroke="#4a4a4a" stroke-width="1">
            <rect x="615.5" y="331.5" width="637" height="451" fill="#fbfbfb" stroke="#3c3c3c" />
            <path d="M657.500 347.500h552M657.500 766.500h552" stroke-dasharray="14 14.316" />
            <path d="M657.500 347.500v419M1209.500 347.500v419" stroke-dasharray="13.500 13.533" />

            <rect x="756.5" y="356.5" width="61" height="54" />
            <path d="M775 362.500h24l12 21-12 21h-24l-12-21z" />
            <circle cx="787" cy="383.5" r="20" />
            <circle cx="787" cy="383.5" r="8" />
            <circle cx="787" cy="383.5" r="7" />
            <circle cx="787" cy="383.5" r="3" />

            <rect x="692.5" y="417.5" width="26" height="26" />
            <circle cx="705" cy="431" r="7" />
            <circle cx="705" cy="431" r="3" />
            <path d="M700 436l4-4M706 430l4-4" />

            <rect x="678.5" y="483.5" width="54" height="105" />
            <path d="M698.500 530v-39.500h13V530" />
            <path d="M684.500 533q10-6 20.500 2 11-8 22 -2v46q-11 7-22 -2-11 8-20.500 2zM705.500 535v42M686 530.500h39l2 3M686 530.500l-1.500 3M684.500 579l2 3.500h39l2-3.500" />

            <rect x="756.5" y="483.5" width="61" height="105" />
            <path d="M780.500 530v-39.500h13V530" />
            <path d="M774.500 536q12-10 24 0v41q-12 9-24 0zM774.500 536q-5-6-7-5.500-4 2-4.500 8v35q.500 7 4.500 9 2 .500 7-5.500M798.500 536q5-6 8-5.500 4 2 4.500 8v35q-.500 7-4.500 9-3 .500-8-5.500M767 530.500h40M767 582.500h40" />

            <rect x="872.5" y="523.5" width="54" height="65" />
            <path d="M884.500 530.500h30l6 7v38l-6 7h-30l-6-7v-38z" />
            <path d="M878.500 544l9-13M878.500 556l19-25M878.500 569l29-38M880 578l35-46M888 582.500l32-43M897 582.500l23-31M906 582.500l14-19M914 582.500l6-8" />

            <rect x="944.5" y="628.5" width="76" height="125" />
            <ellipse cx="982" cy="653.5" rx="6.5" ry="4.5" />
            <path d="M979 655a3 2 0 1 1 5 0M981 652v4" />
            <path d="M975.500 654v32a6.500 4 0 0 0 13 0v-32" />
            <path d="M974 684a8 5 0 0 0 16 1" />
            <path d="M975 676c-7 2-13 6-13 10 0 6 9 11 20 11s20-5 20-11c0-4-6-8-13-10" />
            <path d="M962 683q-3 2-2.500 6v34c1 10 10 15 22 16 14-1 24-9 24-16v-31q0-10-6-14M965.500 735v-36q-4-8-5.500-12M988.500 738v-35q-10-6-23 -4M988.500 703q6-9 17-9" />
          </g>
          <g stroke="#f0b81e" fill="none">
            <path d="M798.500 462v138M776 467.500h22M776 594.500h22M671 519.500h76M678.500 519.500v22M742.500 519.500v22" />
            <path d="M798 467.500l-10-3v6zM798 594.500l-10-3v6zM678.500 520l-2 10h4zM742.500 520l-2 10h4z" fill="#f0b81e" stroke="none" />
          </g>
          <g class="notes">
            <text x="704.5" y="465">B-B (1:16)</text>
            <text x="899.5" y="610">A-A (1:16)</text>
            <text x="798" y="460">A</text>
            <text x="798" y="612">A</text>
            <text x="665" y="524">B</text>
            <text x="755" y="524">B</text>
          </g>
          <g fill="none">
            <path d="M436.500 265v62" stroke="#93b3ac" />
            <path d="M405 297.500h59" stroke="#b9aeb0" />
            <rect x="432.5" y="293.5" width="8" height="7" stroke="#5d5d5d" />
            <path d="M173.500 849v58M216.500 859v46" stroke="#55a28e" />
            <path d="M175 849.500h30M175 905.500h36" stroke="#c49ca0" />
            <path d="M173.500 834v15M207.500 849.500v8h8zM216 905.500h29" stroke="#2c2c2c" />
            <path d="M171 817l2 4 3-4M173 821v5" stroke="#8fb0a8" />
            <path d="M257 899l6 10M263 899l-6 10" stroke="#b8a4a6" />
            <path d="M184 884l3.500 15 3.500-13 3.500 13 3.500-15" stroke="#4a4a4a" />
          </g>
        </svg>

        <div class="float">
          <div class="bar">
            <h3>Zeichnungs Ansichten</h3>
            <button aria-label="Schließen">×</button>
          </div>
          <div class="strip">{#each floatTools as n}{@render tool(n)}{/each}</div>
          <svg class="pointer" viewBox="0 0 32 34"><circle cx="15" cy="15" r="15" fill="#b85a60" fill-opacity=".5" /><path d="M13 11v15l4-3 4 7 2-1-4-7h5z" fill="#ffd9d4" stroke="#d08480" /></svg>
        </div>

        <label class="cmd"><i class="grip"></i><b>:</b><input placeholder="Befehl eingeben" aria-label="Befehl" /><i class="mini-btn"></i></label>
      </div>

      <nav class="layouts">
        <button class="nav" aria-label="Erstes"><svg viewBox="0 0 10 10"><path d="M1 1h1v8H1zM9 1v8L3 5z" /></svg></button>
        <button class="nav" aria-label="Zurück"><svg viewBox="0 0 10 10"><path d="M8 1v8L3 5z" /></svg></button>
        <button class="nav" aria-label="Vor"><svg viewBox="0 0 10 10"><path d="M3 1v8l5-4z" /></svg></button>
        <button class="nav" aria-label="Letztes"><svg viewBox="0 0 10 10"><path d="M8 1h1v8H8zM1 1v8l6-4z" /></svg></button>
        <button class="lst" aria-label="Liste"><svg viewBox="0 0 13 12"><path d="M.5.5h12v11H.5zM.5 4.500h12M.5 7.500h12" /></svg></button>
        <button class="lay">Model</button><button class="lay">Layout1</button><button class="lay">Layout2</button>
        <button class="lay cur">Test1</button><button class="lay add">+</button>
      </nav>
    </section>

    <section class="props">
      <div class="pick">
        <select aria-label="Auswahl"><option>Keine Auswahl</option></select>
        <button aria-label="Filter"><svg viewBox="0 0 10 10"><path d="M1 1h6L5 5v4L3 7V5z" fill="#8a9098" /><path d="M6 6h3v3H6z" fill="#f2b92c" /></svg></button>
        <button aria-label="Ansicht umschalten"><svg viewBox="0 0 10 10"><path d="M0 5l3-3h4l3 3-3 3H3z" fill="#d8dae0" /><circle cx="5" cy="5" r="1" fill="#333" /></svg></button>
      </div>
      <table>
        <colgroup><col class="c-box" /><col class="c-key" /><col /></colgroup>
        {#each sections as s}
          <tbody>
            <tr class="sec"><td><i class="toggle">−</i></td><th colspan="2">{s.name}</th></tr>
            {#each s.rows as row}
              <tr>
                <td>{#if row.plus}<i class="toggle">+</i>{/if}</td>
                <td class="key">{row.k}</td>
                <td class="val" class:dim={row.dim}>
                  {#if row.swatch}<i class="swatch"></i>{/if}{#if row.line}<i class="line {row.line}"></i>{/if}{row.v}
                </td>
              </tr>
            {/each}
          </tbody>
        {/each}
      </table>
    </section>

    <aside class="side">
      <button class="active" aria-label="Eigenschaften"><svg viewBox="0 0 24 24"><path d="M0 4h4M9 4h15M0 12h16M21 12h3M0 20h9M14 20h10" /><circle cx="6.5" cy="4" r="2.5" /><circle cx="18.5" cy="12" r="2.5" /><circle cx="11.500" cy="20" r="2.5" /></svg></button>
      <button aria-label="Layer"><svg viewBox="0 0 24 26"><path d="M12 1l11 6-11 6L1 7zM1 12l11 6 11-6M1 17l11 6 11-6" /></svg></button>
    </aside>

    <aside class="tools right">
      <i class="hgrip"></i>
      {@render column(rightTools)}
    </aside>
  </main>

  <footer>
    <span class="ready">Bereit</span>
    <div class="status">
      {#each status as [label, cls]}<span class={cls}>{label}</span>{/each}
    </div>
    <svg class="resize" viewBox="0 0 12 10"><path d="M9 1h2v2H9zM5 5h2v2H5zM9 5h2v2H9zM1 8h2v2H1zM5 8h2v2H5zM9 8h2v2H9z" fill="#ccc" /></svg>
  </footer>
</div>

<style>
  :global(body) { background: #fff; }
  * { box-sizing: border-box; }
  .app { display: flex; flex-direction: column; min-height: 100vh; padding-bottom: 38px; font: 11px/14px 'Open Sans', 'Noto Sans', sans-serif; color: #e8eaec; background: #fff; }
  button, select, input { font: inherit; color: inherit; background: none; border: 0; padding: 0; margin: 0; border-radius: 0; }
  button { white-space: nowrap; }
  svg { display: block; fill: none; flex: none; overflow: visible; }
  h1, h2, h3 { margin: 0; font-size: inherit; }
  i { font-style: normal; }

  .title { display: flex; align-items: center; height: 24px; padding: 0 19px 0 3px; gap: 4px; color: #111; }
  .title h1 { flex: 1; font-size: 12px; font-weight: 400; }
  .logo { width: 12px; height: 13px; }
  .winbtns { display: flex; gap: 34px; }
  .winbtns svg { width: 12px; height: 12px; stroke: #222; }
  .menu { display: flex; align-items: center; height: 18px; padding-left: 5px; gap: 6px; color: #111; }
  .items { display: flex; gap: 9px; flex: 1; }
  .mdi { display: flex; color: #888; }
  .mdi button { width: 19px; border-left: 1px solid #e8e8e8; font-size: 9px; }

  .toolbar { display: flex; align-items: center; height: 23px; background: #2f3236; }
  .strip { display: flex; }
  .strip .tool { flex: 1; }
  .vstrip { display: flex; flex-direction: column; }
  .vstrip .tool { flex: 1; }
  .tool { display: flex; align-items: center; justify-content: center; min-width: 0; min-height: 0; }
  .tool svg { width: 18px; height: 18px; }
  .tool.on { background: #3b5a80; }
  .grip { width: 3px; height: 15px; margin: 0 3px 0 8px; border-left: 2px dotted #d8d8d8; }
  .toolbar > .grip:first-child { margin: 0 1px 0 5px; }
  .sep { width: 1px; height: 18px; margin: 0 1px 0 2px; background: #43474c; }
  .hsep { width: 18px; height: 1px; margin: 1px auto; background: #43474c; }
  .layers { display: flex; align-items: center; width: 190px; height: 19px; margin: 0 3px 0 6px; background: #44464b; }
  .layers svg { width: 14px; height: 14px; margin: 0 2px; }
  .swatch { display: block; width: 14px; height: 14px; background: #fdbc08; flex: none; }
  .layers .swatch { margin-left: 2px; }
  select { appearance: none; outline: 0; background: url('data:image/svg+xml,<svg xmlns="http://www.w3.org/2000/svg" width="9" height="6"><path d="M1 1l3.500 4L8 1" fill="none" stroke="%23909498"/></svg>') no-repeat right 2px center; }
  .layers select { flex: 1; padding-left: 4px; font-size: 12px; }
  .combo { height: 19px; padding: 0 2px; background-color: #44464b; font-size: 12px; line-height: 17px; }
  .style { width: 75px; margin: 0 4px 0 3px; }
  .space { width: 125px; margin-right: 5px; }

  .tabs { display: flex; height: 23px; padding-left: 9px; background: #1a1b1e; }
  .brand svg { width: 24px; height: 23px; }
  .tab { min-width: 78px; padding: 0 5px; font-size: 13px; line-height: 20px; color: #f2f2f2; }
  .tab.active { background: #2f3236; }

  .ribbon { display: flex; height: 85px; padding-left: 10px; background: #2f3236; }
  .group { display: flex; flex-direction: column; flex: none; padding-top: 2px; border-right: 1px solid #2a2d30; }
  .cells { display: grid; grid-auto-flow: column; height: 64px; flex: none; }
  .g1 { width: 574px; } .g1 .cells { margin-left: 2px; grid-template-columns: 52px 53px 45px 46px 38px 58px 64px 75px 1fr; }
  .g2 { width: 450px; } .g2 .cells { margin-left: 4px; grid-template-columns: 57px 61px 38px 64px 39px 37px 29px 22px 54px 1fr; }
  .g3 { width: 106px; } .g3 .cells { margin-left: 6px; grid-template-columns: 54px 1fr; }
  .g4 { width: 239px; } .g4 .cells { margin-left: 4px; grid-template-columns: 90px 91px 50px; }
  .g5 { width: 55px; }
  .g6 { width: 167px; } .g6 .cells { margin-left: 3px; grid-template-columns: 64px 38px 20px 38px; }
  .g7 { width: 110px; } .g7 .cells { margin-left: 4px; grid-template-columns: 50px 50px; }
  h2 { font-weight: 700; font-size: 11px; line-height: 22px; text-align: center; color: #f4f4f4; }
  .big { display: flex; flex-direction: column; align-items: center; min-width: 0; padding-top: 1px; font-size: 10px; line-height: 14px; }
  .big svg { width: 34px; height: 34px; }
  .big span { display: flex; align-items: center; min-height: 14px; }
  .big.lit { background: #44474d; outline: 1px solid #3f5f92; outline-offset: -1px; }
  .dd { width: 0; height: 0; margin-left: 1px; border: 3px solid transparent; border-top: 4px solid #f0f0f0; border-bottom: 0; }
  .rows { display: flex; flex-direction: column; padding-left: 1px; }
  .rows button { display: flex; align-items: center; height: 19px; gap: 1px; }
  .rows svg { width: 17px; height: 17px; }
  .mini { display: grid; grid-template-columns: 20px; grid-auto-rows: 20px; justify-content: start; padding-left: 1px; }
  .mini.two { grid-template-columns: 20px 20px; }
  .scale { display: flex; flex-direction: column; align-items: center; width: 125px; padding-top: 10px; font-weight: 700; line-height: 12px; }
  .scale svg { width: 32px; height: 32px; }

  main { display: grid; grid-template-columns: 48px 24px 1fr 289px 49px 23px; flex: 1; background: #2f3236; }
  .panels { display: flex; flex-direction: column; }
  .hgrip { display: block; width: 17px; height: 2px; margin: 3px auto 6px; border-top: 2px dotted #d8d8d8; }
  .dark { flex: 1; display: flex; flex-direction: column; align-items: center; gap: 26px; padding-top: 12px; background: #1a1b1e; }
  .dark svg { width: 24px; height: 24px; stroke: #e8e8e8; stroke-width: 1.5; }
  .tools { display: flex; flex-direction: column; align-items: stretch; background: #2b2e33; border-right: 1px solid #24262a; }
  .tools .hgrip { margin: 6px auto 2px; }
  .tools.right { border-right: 0; }
  .tools.right .hgrip { margin: 3px auto 6px; }
  .work { display: flex; flex-direction: column; min-width: 0; }
  .docs { display: flex; height: 18px; padding-top: 2px; font: 700 10px/14px 'Liberation Sans', Arial, sans-serif; }
  .doc { display: flex; align-items: center; justify-content: space-between; padding: 0 8px 0 10px; }
  .first { width: 64px; background: #1a1b1e; }
  .cur.doc { width: 105px; padding-left: 9px; }
  .x svg { width: 8px; height: 8px; stroke: #ccc; }
  .plus { width: 24px; background: #1a1b1e; display: grid; place-items: center; }
  .plus svg { width: 9px; height: 9px; stroke: #bbb; }
  .canvas { position: relative; flex: 1; background: #acacac; box-shadow: inset 0 0 0 1px #bebebe; }
  .drawing { width: 100%; height: 100%; position: absolute; inset: 0; }
  .notes text { font: 15px 'Liberation Sans', Arial, sans-serif; fill: #f0b81e; text-anchor: middle; }

  .float { position: absolute; left: 106px; top: 36px; width: 222px; background: #22262c; box-shadow: 2px 3px 6px #0006; }
  .float .bar { display: flex; align-items: flex-end; justify-content: space-between; height: 29px; padding: 0 0 3px 7px; border-top: 1px solid #444; background: #fff; color: #222; }
  .float h3 { font-weight: 400; font-size: 12px; line-height: 22px; }
  .float .bar button { width: 20px; height: 20px; background: #c94048; color: #fff; font-weight: 700; }
  .float .strip { padding: 1px 4px 3px; width: 222px; }
  .pointer { position: absolute; left: 134px; top: 5px; width: 32px; height: 34px; }

  .cmd { position: absolute; left: 0; right: 163px; bottom: 5px; height: 18px; display: flex; align-items: center; background: #59595a; color: #eee; font: 12px/16px 'DejaVu Sans Mono', monospace; }
  .cmd .grip { margin: 0 7px 0 3px; }
  .cmd input { flex: 1; margin-left: 6px; outline: 0; font-style: italic; }
  .cmd input::placeholder { color: #a8a8a8; opacity: 1; }
  .mini-btn { width: 12px; height: 6px; margin-right: 8px; background: #fff; }

  .layouts { display: flex; height: 17px; border-bottom: 1px solid #55585c; font-size: 10px; line-height: 16px; }
  .layouts button { background: #1a1b1e; }
  .nav { width: 17px; border-right: 1px solid #55585c; display: grid; place-items: center; }
  .nav svg { width: 10px; height: 10px; fill: #f2f2f2; }
  .lst { width: 15px; padding-left: 1px; }
  .lst svg { width: 13px; height: 12px; stroke: #999; }
  .lay { width: 45px; text-align: center; }
  .lay:nth-of-type(6) { width: 36px; }
  .lay.cur { width: 32px; font-weight: 700; font-size: 11px; background: #2f3236; }
  .lay.add { width: 10px; font-size: 12px; }

  .props { padding: 12px 0 0 5px; font-size: 10px; line-height: 16px; border-left: 1px solid #24262a; }
  .pick { display: flex; align-items: center; height: 17px; gap: 2px; margin-bottom: 5px; }
  .pick select { width: 258px; height: 17px; background-color: #44464b; padding: 0 2px; }
  .pick svg { width: 10px; height: 10px; }
  table { width: 100%; border-collapse: separate; border-spacing: 0; table-layout: fixed; }
  .c-box { width: 12px; }
  .c-key { width: 120px; }
  td, th { height: 17px; padding: 0; text-align: left; font-weight: 400; white-space: nowrap; }
  .sec th { background: #44474b; font-weight: 700; font-size: 11px; padding-left: 3px; }
  .toggle { display: block; width: 9px; height: 9px; margin-left: 1px; background: #eee; color: #222; font-size: 10px; font-weight: 700; line-height: 8px; text-align: center; }
  .key { padding-left: 3px; border-bottom: 1px solid #383b3f; }
  .val { padding-left: 3px; border-left: 1px solid #383b3f; border-bottom: 1px solid #383b3f; }
  .val .swatch, .val .line { display: inline-block; vertical-align: middle; margin-right: 4px; }
  .val .line { width: 75px; height: 1px; margin-right: 2px; background: #aaa; }
  .val .line.bright { background: #eee; }
  .dim { color: #777a7e; }

  .side { background: #1a1b1e; }
  .side button { display: grid; place-items: center; width: 100%; height: 48px; }
  .side .active { height: 60px; padding-top: 10px; background: #2f3236; }
  .side svg { width: 24px; height: 26px; stroke: #eee; stroke-width: 1.5; }

  footer { display: flex; align-items: center; height: 18px; border-bottom: 2px solid #2d9c86; background: #1a1b1e; font-size: 10px; line-height: 14px; }
  .ready { flex: 1; padding-left: 2px; }
  .status { display: grid; grid-template-columns: 88px 16px 50px 47px 47px 36px 55px 35px 44px 38px 36px 37px 43px 21px 39px 19px 29px 24px 32px 17px 24px 59px 30px 6px; }
  .status span { border-right: 1px solid #777; text-align: center; white-space: nowrap; }
  .gold { color: #f0b81e; }
  .off { color: #6c6f73; }
  .lit { background: #3a3d41; }
  .resize { width: 12px; height: 10px; margin: 0 1px 0 10px; }
</style>
